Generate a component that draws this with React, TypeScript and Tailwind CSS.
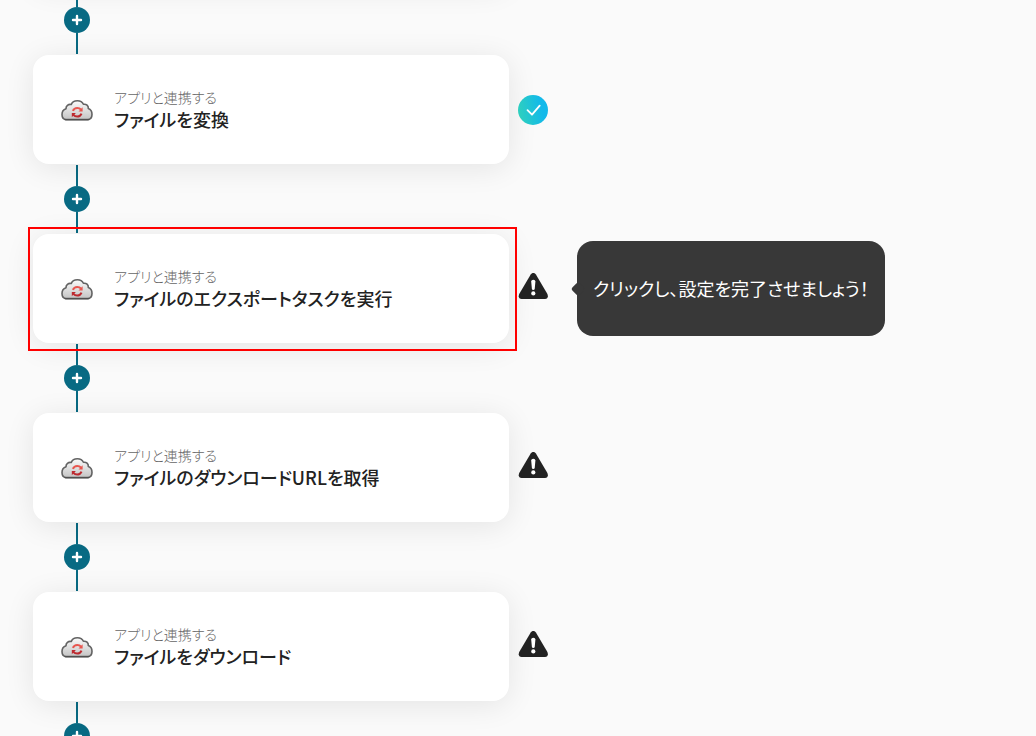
import React from "react";

type Status = "done" | "warning";

interface Step {
  title: string;
  status: Status;
  highlighted?: boolean;
  hint?: string;
}

const steps: Step[] = [
  { title: "ファイルを変換", status: "done" },
  {
    title: "ファイルのエクスポートタスクを実行",
    status: "warning",
    highlighted: true,
    hint: "クリックし、設定を完了させましょう！",
  },
  { title: "ファイルのダウンロードURLを取得", status: "warning" },
  { title: "ファイルをダウンロード", status: "warning" },
];

function CloudIcon() {
  return (
    <svg viewBox="0 -1 32 24" className="h-6 w-8 shrink-0" aria-hidden="true">
      <defs>
        <linearGradient id="cloud" x1="0" y1="0" x2="0" y2="1">
          <stop offset="0" stopColor="#fafafa" />
          <stop offset="1" stopColor="#c4c4c4" />
        </linearGradient>
      </defs>
      <path
        d="M5 20.6C2.3 20.2 1 18 1 15.4C1 12.7 2.6 10.6 5 9.8C4.8 6.9 7.3 4.8 10.3 5.5C11.2 3.1 13.5 1.8 16.4 1.8C19.2 1.8 21.4 3 22.4 5.3C25.3 4.8 27.6 6.8 27.3 9.6C29.7 10.5 31 12.6 31 15.4C31 18.1 29.5 20.2 26.8 20.6Z"
        fill="url(#cloud)"
        stroke="#636363"
        strokeWidth="1.6"
        strokeLinejoin="round"
      />
      <path d="M4 20.6H28" stroke="#505050" strokeWidth="1.4" strokeLinecap="round" />
      <path d="M11.9 11.8C12.7 9.9 14.3 8.9 16.2 8.9C17.8 8.9 19.1 9.5 20 10.6" fill="none" stroke="#e8554e" strokeWidth="2" />
      <path d="M21.6 8.3V12.4H17.5Z" fill="#e8554e" />
      <path d="M20.5 14.6C19.7 16.6 18.1 17.6 16.2 17.6C14.6 17.6 13.3 17 12.4 15.9" fill="none" stroke="#bd2a30" strokeWidth="2" />
      <path d="M10.8 18.2V14.1H14.9Z" fill="#bd2a30" />
    </svg>
  );
}

function DoneIcon() {
  return (
    <svg viewBox="0 0 30 30" className="size-[30px]" role="img" aria-label="完了">
      <defs>
        <linearGradient id="done" x1="0" y1="0.6" x2="1" y2="0.4">
          <stop offset="0" stopColor="#2fd0bd" />
          <stop offset="0.8" stopColor="#12b9ea" />
        </linearGradient>
      </defs>
      <circle cx="15" cy="15" r="15" fill="url(#done)" />
      <path
        d="M9.5 15.2L14 19.7L21.7 10.7"
        fill="none"
        stroke="#fff"
        strokeWidth="1.8"
        strokeLinecap="round"
        strokeLinejoin="round"
      />
    </svg>
  );
}

function WarningIcon() {
  return (
    <svg viewBox="0 0 30 28" className="mb-1 h-7 w-[30px]" role="img" aria-label="要設定">
      <path
        d="M12.7 1.4Q15.3 -1.6 17.9 1.4L29.4 20.9Q31 25.6 27 26H3.6Q-0.4 25.6 1.2 20.9Z"
        fill="#222"
      />
      <path d="M13.2 8.6Q13.2 6.8 15.3 6.8T17.4 8.6L16.7 15.9Q16.5 17 15.3 17T13.9 15.9Z" fill="#fff" />
      <circle cx="15.3" cy="20.4" r="2.1" fill="#fff" />
    </svg>
  );
}

function Connector() {
  return (
    <div className="ml-[31px] flex h-[70px] w-[26px] flex-col items-center py-px">
      <span className="w-0.5 flex-1 bg-[#086a83]" />
      <button
        type="button"
        aria-label="ステップを追加"
        className="flex size-[26px] shrink-0 cursor-pointer items-center justify-center rounded-full bg-[#086a83]"
      >
        <svg viewBox="0 0 12 12" className="size-3" aria-hidden="true">
          <path d="M6 2V10M2 6H10" stroke="#fff" strokeWidth="2.4" strokeLinecap="round" />
        </svg>
      </button>
      <span className="w-0.5 flex-1 bg-[#086a83]" />
    </div>
  );
}

function StepRow({ step }: { step: Step }) {
  return (
    <div className="flex items-center">
      <div className="relative w-full max-w-[476px]">
        <button
          type="button"
          className="flex h-[109px] w-full cursor-pointer items-center gap-[21px] rounded-2xl bg-white px-7 text-left shadow-[0_4px_30px_rgba(0,0,0,0.09)]"
        >
          <CloudIcon />
          <span className="flex flex-col pb-0.5">
            <span className="text-[14px] leading-5 font-light text-[#666]">アプリと連携する</span>
            <span className="text-[18px] leading-6 font-medium text-[#222]">{step.title}</span>
          </span>
        </button>
        {step.highlighted && (
          <span className="pointer-events-none absolute -top-[7px] -right-2 -bottom-2 -left-[5px] border-2 border-[#f00]" />
        )}
      </div>
      <div className="relative ml-[9px] w-[30px] shrink-0">
        {step.status === "done" ? <DoneIcon /> : <WarningIcon />}
      </div>
      {step.hint && (
        <div
          role="tooltip"
          className="relative ml-[29px] flex h-[95px] shrink-0 items-center rounded-2xl bg-[#383838] px-4 text-[18px] whitespace-nowrap text-white"
        >
          <span className="absolute top-1/2 -left-1 size-[10px] -translate-y-1/2 rotate-45 rounded-xs bg-[#383838]" />
          {step.hint}
        </div>
      )}
    </div>
  );
}

export default function App() {
  return (
    <main className="h-screen overflow-hidden bg-[#fafafa] px-[33px] font-['Noto_Sans_CJK_JP',sans-serif] [font-feature-settings:'palt']">
      <div className="-mt-[124px] h-[109px] w-full max-w-[476px] rounded-2xl bg-white shadow-[0_4px_30px_rgba(0,0,0,0.09)]" />
      <Connector />
      {steps.map((step) => (
        <React.Fragment key={step.title}>
          <StepRow step={step} />
          <Connector />
        </React.Fragment>
      ))}
    </main>
  );
}
